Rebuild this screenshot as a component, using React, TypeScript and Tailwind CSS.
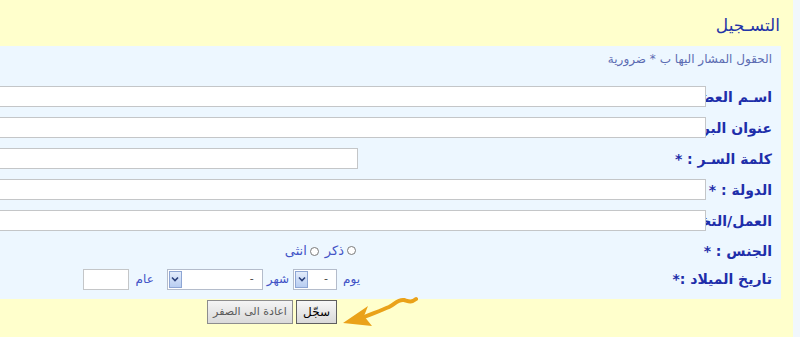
import React from "react";

const labelStyling =
    "w-[66px] shrink-0 whitespace-nowrap text-[14px] font-bold leading-[16px] text-[#1e2eaa]";
const textInputStyling =
    "relative h-[21px] w-[760px] shrink-0 border border-[#c4c6c8] bg-white";
const smallTextStyling = "text-[12px] leading-[14px] text-[#4253c6]";

const FieldRow = ({ label, children, height = "h-[31px]" }: { label: string; children?: React.ReactNode; height?: string }) => {
    return (
        <div className={`flex items-center ${height}`}>
            <div className={labelStyling}>{label}</div>
            {children}
        </div>
    );
};

const Chevron = () => (
    <svg width="8" height="6" viewBox="0 0 8 6">
        <path d="M1 1.5 L4 4.5 L7 1.5" fill="none" stroke="#2a3f7a" strokeWidth="1.6" />
    </svg>
);

const FakeSelect = ({ width }: { width: string }) => {
    return (
        <div className={`flex h-[21px] ${width} items-stretch border border-[#b4bccb] bg-white`}>
            <span className="flex flex-1 items-center pr-[8px] text-[11px] text-[#444]">-</span>
            <span className="m-[1px] flex w-[13px] items-center justify-center border border-[#8ea6d4] bg-gradient-to-b from-[#e3ecfb] to-[#b8cdf1]">
                <Chevron />
            </span>
        </div>
    );
};

const Radio = () => (
    <span className="inline-block size-[9px] rounded-full border border-[#7a7a7a] bg-white"></span>
);

export default function App() {
    return (
        <div className="flex h-[337px] w-[800px] overflow-hidden font-['DejaVu_Sans',sans-serif]">
            <div dir="rtl" className="w-[793px] shrink-0 bg-[#ffffcc]">
                {/* Title */}
                <div className="flex h-[46px] items-center pr-[13px] pt-[6px] text-[17px] text-[#2434a8]">
                    التسـجيل
                </div>

                {/* Form panel */}
                <div className="mr-[12px] bg-[#edf7ff] pb-[6px] pr-[9px]">
                    <div className="h-[35px] pt-[6px] text-[12px] leading-[14px] text-[#5c6cb2]">
                        الحقول المشار اليها ب * ضرورية
                    </div>

                    <FieldRow label="اسـم العضو : *">
                        <input className={textInputStyling} />
                    </FieldRow>
                    <FieldRow label="عنوان البريد : *">
                        <input className={textInputStyling} />
                    </FieldRow>
                    <FieldRow label="كلمة السـر : *">
                        <input type="password" className={`${textInputStyling} mr-[348px]`} />
                    </FieldRow>
                    <FieldRow label="الدولة : *">
                        <input className={textInputStyling} />
                    </FieldRow>
                    <FieldRow label="العمل/التخصص">
                        <input className={textInputStyling} />
                    </FieldRow>

                    <FieldRow label="الجنس : *" height="h-[29px]">
                        <div className="mr-[350px] flex items-center gap-[3px]">
                            <Radio />
                            <span className="text-[13px] leading-[14px] text-[#4253c6]">ذكر</span>
                            <span className="mr-[3px]"><Radio /></span>
                            <span className="text-[13px] leading-[14px] text-[#4253c6]">انثى</span>
                        </div>
                    </FieldRow>

                    <FieldRow label="تاريخ الميلاد :*" height="h-[28px]">
                        <div className="mr-[346px] flex items-center">
                            <span className={smallTextStyling}>يوم</span>
                            <div className="mr-[6px]">
                                <FakeSelect width="w-[44px]" />
                            </div>
                            <span className={`${smallTextStyling} mr-[4px]`}>شهر</span>
                            <div className="mr-[4px]">
                                <FakeSelect width="w-[96px]" />
                            </div>
                            <span className={`${smallTextStyling} mr-[13px]`}>عام</span>
                            <input className="mr-[7px] h-[21px] w-[46px] border border-[#c4c6c8] bg-white" />
                        </div>
                    </FieldRow>
                </div>

                {/* Buttons */}
                <div className="mr-[375px] mt-[-4px] flex items-center">
                    <svg width="76" height="34" viewBox="0 0 76 34">
                        <path
                            d="M22 22 C 32 18, 40 15, 47 12 C 53 9, 56 4, 62 5 C 66 6, 69 8, 74 4"
                            fill="none"
                            stroke="#eaa21a"
                            strokeWidth="4"
                            strokeLinecap="round"
                        />
                        <path d="M1 28 L 26 11 L 22 21 L 30 31 Z" fill="#eaa21a" />
                    </svg>
                    <button className="mr-[5px] h-[24px] w-[41px] border border-[#5f5f5f] bg-gradient-to-b from-[#f7f7f7] to-[#d9d9d9] text-[12px] text-black">
                        سجّل
                    </button>
                    <button className="mr-[3px] h-[24px] w-[86px] border border-[#8d8d8d] bg-gradient-to-b from-[#f4f4f4] to-[#dadada] text-[11px] text-[#5a5a5a]">
                        اعادة الى الصفر
                    </button>
                </div>
            </div>
            <div className="w-[7px] shrink-0 bg-[#f1f7fc]"></div>
        </div>
    );
}
